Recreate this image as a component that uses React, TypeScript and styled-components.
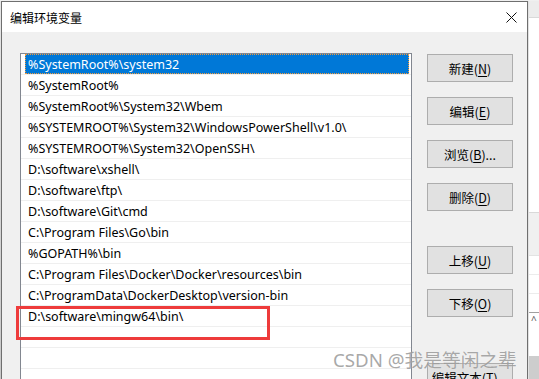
import React from "react";
import styled, { createGlobalStyle } from "styled-components";

const Global = createGlobalStyle`
  html, body { margin: 0; padding: 0; background: #f0f0f0; }
  body { font-family: "Noto Sans", "Noto Sans CJK SC", sans-serif; }
  #root { width: 539px; height: 379px; overflow: hidden; }
`;

const Screen = styled.div`
  position: relative;
  display: flex;
  width: 539px;
  height: 379px;
  overflow: hidden;
  padding-top: 1px;
  box-sizing: border-box;
  background: #f0f0f0;
`;

const LeftStrip = styled.div`
  width: 1px;
  flex: none;
  background: linear-gradient(#e6e6e6, #c8c8c8);
`;

const Frame = styled.div`
  width: 527px;
  flex: none;
  box-sizing: border-box;
  border: 1px solid #6f6f6f;
  background: #f0f0f0;
  display: flex;
  flex-direction: column;
  height: 420px;
`;

const TitleBar = styled.div`
  height: 30px;
  flex: none;
  background: #ffffff;
  display: flex;
  align-items: center;
  justify-content: space-between;
  padding: 0 10px 0 8px;
  font-family: "Noto Sans CJK SC", sans-serif;
  font-size: 12px;
  color: #000;
`;

const Close = styled.svg`
  width: 11px;
  height: 11px;
`;

const Body = styled.div`
  display: flex;
  gap: 15px;
  padding: 21px 14px 0 18px;
`;

const ListBox = styled.div`
  width: 392px;
  height: 360px;
  flex: none;
  box-sizing: border-box;
  border: 1px solid #828790;
  border-bottom: none;
  background: #fff;
`;

const Row = styled.div`
  height: 21px;
  box-sizing: border-box;
  border-bottom: 1px solid #efefef;
  padding: 0 2px 0 4px;
  display: flex;
`;

const Cell = styled.div<{ $selected?: boolean }>`
  flex: 1;
  height: 20px;
  box-sizing: border-box;
  padding: 1px 0 0 3px;
  line-height: 20px;
  font-family: "Noto Sans", "Noto Sans CJK SC", sans-serif;
  font-size: 12.5px;
  white-space: nowrap;
  overflow: hidden;
  color: ${(p) => (p.$selected ? "#fff" : "#000")};
  background: ${(p) => (p.$selected ? "#0078d7" : "transparent")};
  outline: ${(p) => (p.$selected ? "1px dotted #f29b3c" : "none")};
  outline-offset: -1px;
`;

const Buttons = styled.div`
  width: 86px;
  flex: none;
  display: flex;
  flex-direction: column;
  gap: 15px;
  padding-top: 1px;
`;

const Button = styled.div`
  height: 28px;
  box-sizing: border-box;
  border: 1px solid #adadad;
  background: #e1e1e1;
  display: flex;
  align-items: center;
  justify-content: center;
  font-family: "Noto Sans CJK SC", sans-serif;
  font-size: 12.5px;
  color: #000;
  u { text-underline-offset: 2px; }
`;

const Spacer = styled.div<{ $h: number }>`
  height: ${(p) => p.$h}px;
  flex: none;
`;

const RightStrip = styled.div`
  flex: 1;
  display: flex;
  flex-direction: column;
  border-left: 1px solid #e2e2e2;
`;

const Seg = styled.div<{ $h: number; $bg: string; $line?: string }>`
  height: ${(p) => p.$h}px;
  flex: none;
  background: ${(p) => p.$bg};
  border-bottom: ${(p) => (p.$line ? `1px solid ${p.$line}` : "none")};
  box-sizing: border-box;
  font-size: 10px;
  color: #555;
  padding-left: 2px;
`;

const Watermark = styled.div`
  position: absolute;
  left: 333px;
  top: 345px;
  font-family: "Noto Sans", "Noto Sans CJK SC", sans-serif;
  font-size: 18.7px;
  color: rgba(140, 140, 140, 0.75);
  text-shadow: 0 0 1px rgba(255, 255, 255, 0.6);
  white-space: nowrap;
`;

const Highlight = styled.div`
  position: absolute;
  left: 16px;
  top: 306px;
  width: 254px;
  height: 34px;
  box-sizing: border-box;
  border: 3px solid #ee3b3b;
`;

const paths = [
  "%SystemRoot%\\system32",
  "%SystemRoot%",
  "%SystemRoot%\\System32\\Wbem",
  "%SYSTEMROOT%\\System32\\WindowsPowerShell\\v1.0\\",
  "%SYSTEMROOT%\\System32\\OpenSSH\\",
  "D:\\software\\xshell\\",
  "D:\\software\\ftp\\",
  "D:\\software\\Git\\cmd",
  "C:\\Program Files\\Go\\bin",
  "%GOPATH%\\bin",
  "C:\\Program Files\\Docker\\Docker\\resources\\bin",
  "C:\\ProgramData\\DockerDesktop\\version-bin",
  "D:\\software\\mingw64\\bin\\",
  "",
  "",
  "",
];

export default function App() {
  return (
    <>
      <Global />
      <Screen>
        <LeftStrip />
        <Frame>
          <TitleBar>
            <span>编辑环境变量</span>
            <Close viewBox="0 0 11 11">
              <path d="M0.5 0.5 L10.5 10.5 M10.5 0.5 L0.5 10.5" stroke="#111" strokeWidth="1" fill="none" />
            </Close>
          </TitleBar>
          <Body>
            <ListBox>
              {paths.map((p, i) => (
                <Row key={i}>
                  <Cell $selected={i === 0}>{p}</Cell>
                </Row>
              ))}
            </ListBox>
            <Buttons>
              <Button>新建(<u>N</u>)</Button>
              <Button>编辑(<u>E</u>)</Button>
              <Button>浏览(<u>B</u>)...</Button>
              <Button>删除(<u>D</u>)</Button>
              <Spacer $h={5} />
              <Button>上移(<u>U</u>)</Button>
              <Button>下移(<u>O</u>)</Button>
              <Spacer $h={16} />
              <Button>编辑文本(<u>T</u>)...</Button>
            </Buttons>
          </Body>
        </Frame>
        <RightStrip>
          <Seg $h={17} $bg="#ececec" $line="#d9d9d9" />
          <Seg $h={195} $bg="#ffffff" $line="#d9d9d9" />
          <Seg $h={43} $bg="#f0f0f0" $line="#e3e3e3" />
          <Seg $h={19} $bg="#ffffff" $line="#ececec" />
          <Seg $h={19} $bg="#ffffff" $line="#ececec" />
          <Seg $h={19} $bg="#ffffff" $line="#a0a0a0" />
          <Seg $h={43} $bg="#ffffff">^</Seg>
          <Seg $h={40} $bg="#cdcdcd" />
        </RightStrip>
        <Highlight />
        <Watermark>CSDN @我是等闲之辈</Watermark>
      </Screen>
    </>
  );
}
